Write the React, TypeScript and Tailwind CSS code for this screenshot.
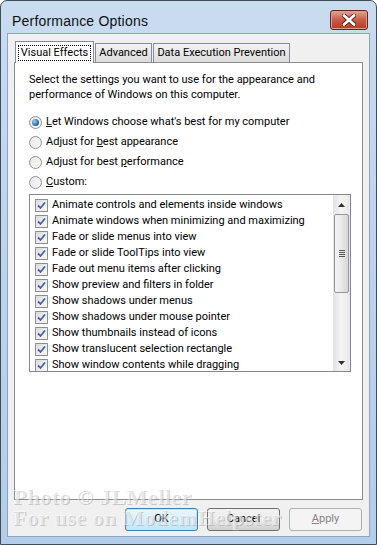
const ui = "font-['Roboto',sans-serif]";

const effects = [
    "Animate controls and elements inside windows",
    "Animate windows when minimizing and maximizing",
    "Fade or slide menus into view",
    "Fade or slide ToolTips into view",
    "Fade out menu items after clicking",
    "Show preview and filters in folder",
    "Show shadows under menus",
    "Show shadows under mouse pointer",
    "Show thumbnails instead of icons",
    "Show translucent selection rectangle",
    "Show window contents while dragging",
];

function Radio({ checked, children }: { checked?: boolean; children: React.ReactNode }) {
    return (
        <div className="flex h-[20px] items-center gap-[4px]">
            <span className="flex h-[13px] w-[13px] items-center justify-center rounded-full border border-[#8e8f8f] bg-gradient-to-br from-[#e6e6e6] to-[#fafafa]">
                {checked && (
                    <span className="h-[7px] w-[7px] rounded-full bg-[radial-gradient(circle_at_35%_35%,#9ad1f8,#1f5d9e_70%)]" />
                )}
            </span>
            <span className="whitespace-nowrap">{children}</span>
        </div>
    );
}

function Check({ label }: { label: string }) {
    return (
        <div className="flex h-[16px] items-center gap-[4px] pl-[5px]">
            <span className="flex h-[13px] w-[13px] shrink-0 items-center justify-center border border-[#8f8f8f] bg-gradient-to-br from-[#dcdcdc] to-[#fbfbfb]">
                <svg width="9" height="9" viewBox="0 0 9 9">
                    <path d="M1 4.5 L3.5 7 L8 1.5" fill="none" stroke="#4c61a1" strokeWidth="1.8" />
                </svg>
            </span>
            <span className="whitespace-nowrap">{label}</span>
        </div>
    );
}

function Button({ children, primary, disabled }: { children: React.ReactNode; primary?: boolean; disabled?: boolean }) {
    return (
        <div
            className={`flex h-[23px] w-[73px] items-center justify-center rounded-[3px] border ${
                primary
                    ? "border-[#3c7fb1] bg-gradient-to-b from-[#eaf6fd] to-[#bee6fd] shadow-[inset_0_0_0_1px_#c0e8fc]"
                    : disabled
                    ? "border-[#adb2b5] bg-[#f4f4f4] text-[#838383]"
                    : "border-[#707070] bg-gradient-to-b from-[#f2f2f2] via-[#ebebeb] to-[#cfcfcf]"
            }`}
        >
            {children}
        </div>
    );
}

export default function App() {
    return (
        <div className={`relative flex h-[545px] w-[377px] flex-col overflow-hidden rounded-t-[7px] border border-[#404c5a] bg-gradient-to-b from-[#c9dcf0] via-[#bcd3ec] to-[#b3cdea] text-[11px] text-black ${ui}`}>
            {/* title bar */}
            <div className="flex h-[32px] shrink-0 items-center justify-between pl-[11px] pr-[8px]">
                <span className="pt-[9px] font-['Liberation_Sans',sans-serif] text-[14px] tracking-[0.2px] text-[#111]">
                    Performance Options
                </span>
                <div className="mt-[6px] flex h-[20px] w-[38px] items-center justify-center rounded-[3px] border border-[#5c2621] bg-gradient-to-b from-[#e3a493] via-[#c75a46] to-[#b53c26] shadow-[inset_0_0_0_1px_#e79a88]">
                    <svg width="14" height="12" viewBox="0 0 14 12">
                        <path d="M2 1.5 L12 10.5 M12 1.5 L2 10.5" stroke="#5a1d14" strokeWidth="4.4" strokeLinecap="round" />
                        <path d="M2 1.5 L12 10.5 M12 1.5 L2 10.5" stroke="#fff" strokeWidth="2.8" strokeLinecap="round" />
                    </svg>
                </div>
            </div>

            {/* client */}
            <div className="mx-[6px] flex h-[504px] shrink-0 flex-col border border-[#8aa4c2] bg-[#f0f0f0] px-[6px]">
                {/* tabs */}
                <div className="mt-[7px] flex h-[21px] items-end pl-[1px]">
                    <div className="z-10 -mb-px flex h-[22px] w-[79px] items-center justify-center border border-b-0 border-[#898c95] bg-white">
                        <span className="border border-dotted border-black px-[2px] leading-[14px]">Visual Effects</span>
                    </div>
                    <div className="ml-[1px] flex h-[19px] w-[57px] items-center justify-center border border-b-0 border-[#898c95] bg-gradient-to-b from-[#f3f3f3] to-[#dcdcdc]">
                        Advanced
                    </div>
                    <div className="ml-[1px] flex h-[19px] w-[137px] items-center justify-center border border-b-0 border-[#898c95] bg-gradient-to-b from-[#f3f3f3] to-[#dcdcdc]">
                        Data Execution Prevention
                    </div>
                </div>

                {/* panel */}
                <div className="flex h-[438px] flex-col border border-[#898c95] bg-white pl-[14px] pr-[11px]">
                    <p className="mt-[9px] whitespace-nowrap leading-[15px]">
                        Select the settings you want to use for the appearance and
                        <br />
                        performance of Windows on this computer.
                    </p>
                    <div className="mt-[10px] flex flex-col">
                        <Radio checked>
                            <u>L</u>et Windows choose what's best for my computer
                        </Radio>
                        <Radio>
                            Adjust for <u>b</u>est appearance
                        </Radio>
                        <Radio>
                            Adjust for best <u>p</u>erformance
                        </Radio>
                        <Radio>
                            <u>C</u>ustom:
                        </Radio>
                    </div>
                    <div className="mt-[2px] flex h-[178px] border border-[#828790] bg-white">
                        <div className="flex flex-1 flex-col overflow-hidden pt-[2px]">
                            {effects.map((e, i) => (
                                <Check key={i} label={e} />
                            ))}
                        </div>
                        <div className="flex w-[17px] flex-col items-center bg-gradient-to-r from-[#e3e3e3] via-[#f4f4f4] to-[#e8e8e8]">
                            <div className="flex h-[19px] items-center justify-center">
                                <svg width="7" height="4" viewBox="0 0 7 4">
                                    <path d="M0 4 L3.5 0 L7 4 Z" fill="#333" />
                                </svg>
                            </div>
                            <div className="flex h-[79px] w-[15px] items-center justify-center rounded-[2px] border border-[#979797] bg-gradient-to-r from-[#f3f3f3] via-[#e9e9e9] to-[#d6d6d6]">
                                <div className="flex flex-col gap-[1px]">
                                    <span className="h-px w-[6px] bg-[#555]" />
                                    <span className="h-px w-[6px] bg-[#555]" />
                                    <span className="h-px w-[6px] bg-[#555]" />
                                    <span className="h-px w-[6px] bg-[#555]" />
                                </div>
                            </div>
                            <div className="flex-1" />
                            <div className="flex h-[17px] items-center justify-center">
                                <svg width="7" height="4" viewBox="0 0 7 4">
                                    <path d="M0 0 L3.5 4 L7 0 Z" fill="#333" />
                                </svg>
                            </div>
                        </div>
                    </div>
                </div>

                {/* buttons */}
                <div className="mt-[8px] flex justify-end gap-[9px] pr-[1px]">
                    <Button primary>OK</Button>
                    <Button>Cancel</Button>
                    <Button disabled>
                        <u>A</u>pply
                    </Button>
                </div>
            </div>

            {/* watermark */}
            <div className="pointer-events-none absolute left-[12px] top-[485px] font-['Liberation_Serif',serif] text-[22px] font-bold leading-[21px] tracking-[0.5px] text-white/50 [text-shadow:1px_1px_0_rgba(150,150,150,0.45)]">
                <div>Photo © JLMeller</div>
                <div>For use on ModemHelpster</div>
            </div>
        </div>
    );
}
